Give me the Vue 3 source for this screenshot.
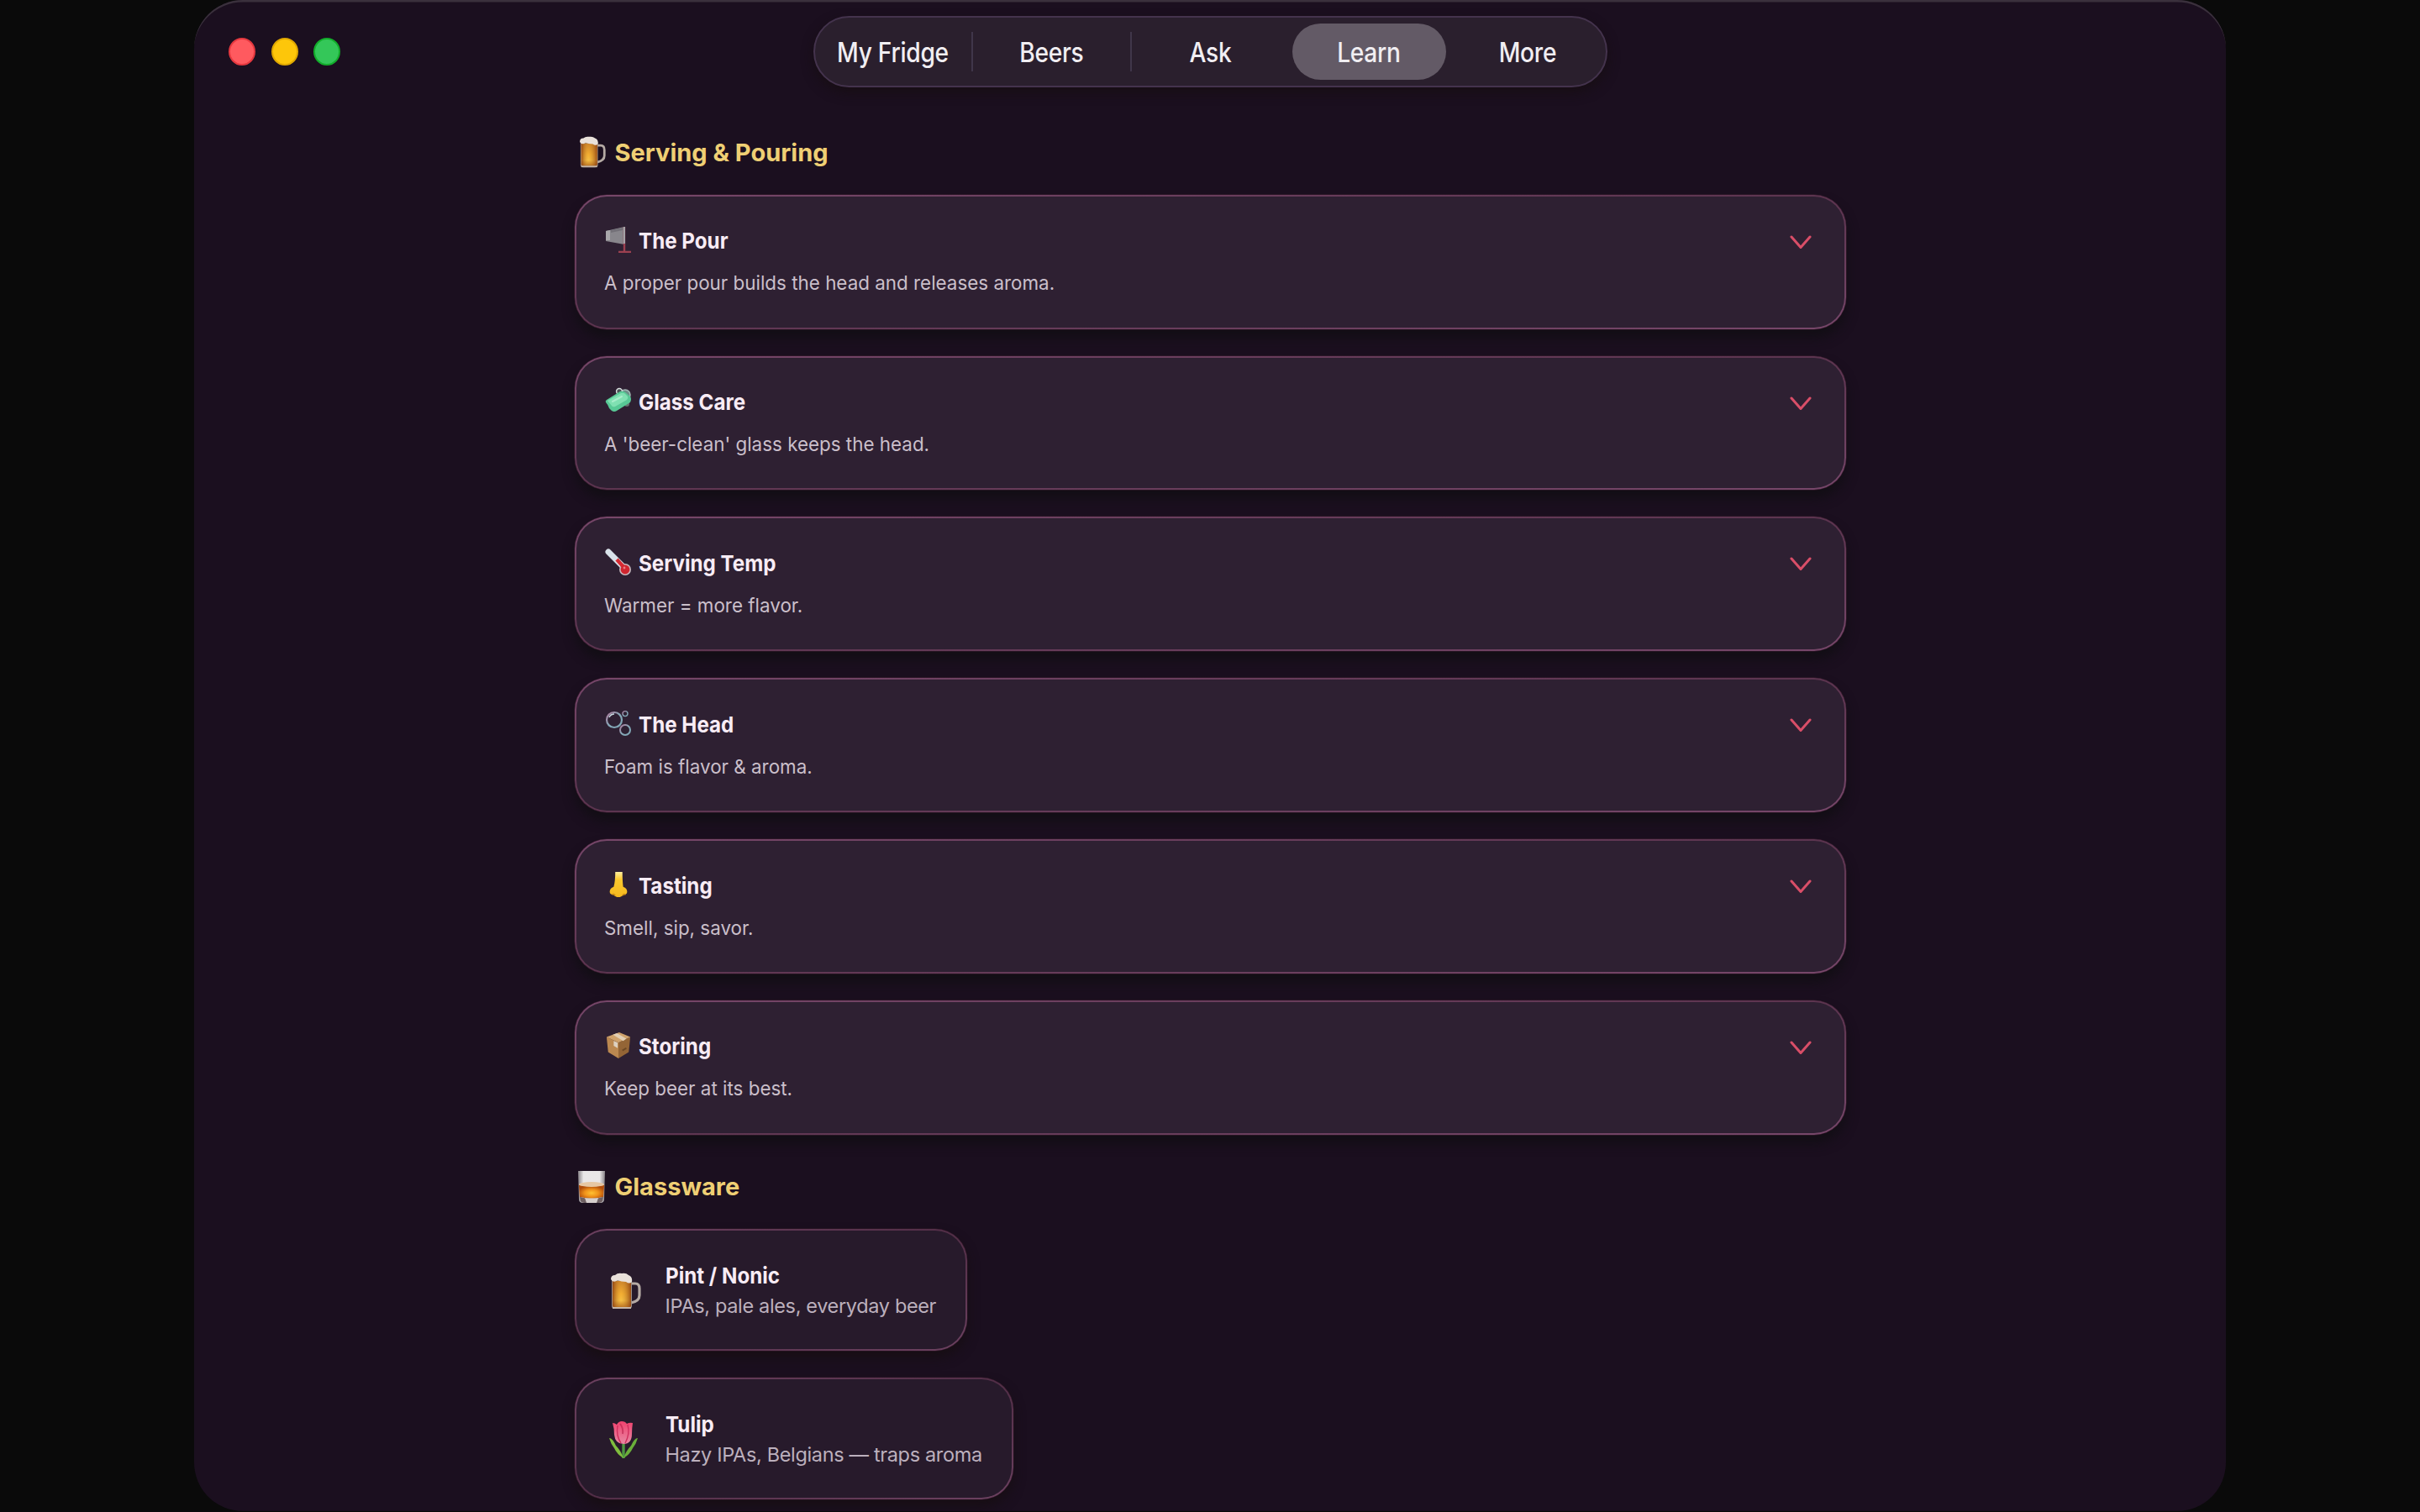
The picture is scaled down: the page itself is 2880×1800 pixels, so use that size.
<script setup>
import { ref } from 'vue';

const tabs = ['My Fridge', 'Beers', 'Ask', 'Learn', 'More'];
const activeTab = ref('Learn');

const serving = ref([
    { id: 'pour', title: 'The Pour', text: 'A proper pour builds the head and releases aroma.' },
    { id: 'soap', title: 'Glass Care', text: "A 'beer-clean' glass keeps the head." },
    { id: 'temp', title: 'Serving Temp', text: 'Warmer = more flavor.' },
    { id: 'bubbles', title: 'The Head', text: 'Foam is flavor & aroma.' },
    { id: 'nose', title: 'Tasting', text: 'Smell, sip, savor.' },
    { id: 'box', title: 'Storing', text: 'Keep beer at its best.' }
]);

const glassware = [
    { id: 'mug', title: 'Pint / Nonic', text: 'IPAs, pale ales, everyday beer' },
    { id: 'tulip', title: 'Tulip', text: 'Hazy IPAs, Belgians — traps aroma' }
];

// a divider is only shown between two tabs that are not next to the active one
const hasDivider = (index) => {
    const active = tabs.indexOf(activeTab.value);
    return index !== active && index !== active + 1;
}
</script>

<template>
    <svg class="sprite" width="0" height="0" aria-hidden="true">
        <defs>
            <linearGradient id="beer" x1="0" y1="0" x2="0" y2="1">
                <stop offset="0" stop-color="#b8621c" />
                <stop offset="0.5" stop-color="#f0a028" />
                <stop offset="0.75" stop-color="#f2b640" />
                <stop offset="1" stop-color="#a04c12" />
            </linearGradient>
            <linearGradient id="beerSide" x1="0" y1="0" x2="1" y2="0">
                <stop offset="0" stop-color="#8c3f10" stop-opacity="0.85" />
                <stop offset="0.45" stop-color="#ffd24a" stop-opacity="0.3" />
                <stop offset="1" stop-color="#8c3f10" stop-opacity="0.85" />
            </linearGradient>
            <radialGradient id="whisky" cx="0.5" cy="0.6" r="0.55">
                <stop offset="0" stop-color="#ffc233" />
                <stop offset="0.5" stop-color="#f0921a" />
                <stop offset="1" stop-color="#b04c0a" />
            </radialGradient>
            <linearGradient id="glassTop" x1="0" y1="0" x2="1" y2="0">
                <stop offset="0" stop-color="#8f8b8f" />
                <stop offset="0.2" stop-color="#f4f2f2" />
                <stop offset="0.8" stop-color="#f4f2f2" />
                <stop offset="1" stop-color="#8f8b8f" />
            </linearGradient>
            <linearGradient id="skin" x1="0" y1="0" x2="0" y2="1">
                <stop offset="0" stop-color="#fff0a0" />
                <stop offset="0.3" stop-color="#fcc92e" />
                <stop offset="1" stop-color="#f5b81e" />
            </linearGradient>
            <linearGradient id="petal" x1="0" y1="0" x2="0" y2="1">
                <stop offset="0" stop-color="#f0426e" />
                <stop offset="1" stop-color="#e888a4" />
            </linearGradient>
            <linearGradient id="bubble" x1="0" y1="0" x2="1" y2="1">
                <stop offset="0" stop-color="#b07a9c" />
                <stop offset="0.5" stop-color="#86a9b8" />
                <stop offset="1" stop-color="#7fa5b4" />
            </linearGradient>
        </defs>

        <symbol id="mug" viewBox="0 0 36 44" preserveAspectRatio="none">
            <path d="M24 13h5q5 0 5 6v8q0 7-10 9" fill="none" stroke="#b5aaa4" stroke-width="3.2" />
            <path d="M1 8h24v32q0 3-4 3H5q-4 0-4-3z" fill="#9c8f86" />
            <path d="M2 10h22v29q0 2-3 2H5q-3 0-3-2z" fill="url(#beer)" />
            <path d="M2 10h22v29q0 2-3 2H5q-3 0-3-2z" fill="url(#beerSide)" />
            <path d="M0 8Q0 3 5 3Q8 0 13 1Q18 0 21 3Q26 5 25 11Q22 14 18 11Q12 11 8 9Q3 13 0 8z" fill="#e9e1da" />
            <path d="M2 42h22" stroke="#c5b6a8" stroke-width="2" />
        </symbol>

        <symbol id="tumbler" viewBox="0 0 34 40" preserveAspectRatio="none">
            <path d="M1 1h32l-1 34q0 4-5 4H7q-5 0-5-4z" fill="url(#glassTop)" opacity="0.95" />
            <path d="M2 18h30l-1 14q-14 3-28 0z" fill="url(#whisky)" />
            <ellipse cx="17" cy="17" rx="15" ry="3" fill="#e6c7a4" />
            <path d="M3 32q14 4 28 0l-1 5q-1 2-4 2H8q-3 0-4-2z" fill="#6e6062" />
            <path d="M9 33q8 2 16 0l-2 6H11z" fill="#d6cfcd" />
        </symbol>

        <symbol id="pour" viewBox="0 0 32 32">
            <path d="M1 6L23 1v21L1 18z" fill="#88868c" />
            <path d="M1 6l5-1v12l-5 0z" fill="#a8a7aa" />
            <path d="M7 5l14-3v3L7 8z" fill="#737078" />
            <path d="M23 1v29M16 31h15" fill="none" stroke="#9c4050" stroke-width="2.4" />
            <path d="M23 1v20" stroke="#a4a2a6" stroke-width="2" />
        </symbol>

        <symbol id="soap" viewBox="0 0 32 32">
            <circle cx="24" cy="9" r="6" fill="#6c8f88" stroke="#a4b8b6" stroke-width="1.5" />
            <circle cx="17" cy="5" r="3.4" fill="#4b5355" stroke="#d6dddd" stroke-width="1.5" />
            <circle cx="26" cy="20" r="3" fill="#65736f" />
            <path d="M2 15L18 5q3-1 6 1l6 5q2 3 0 7L14 28q-3 2-6 0l-3-3q-2-5-4-7-1-2 1-3z" fill="#58c996" />
            <path d="M3 16L19 7q3-1 5 1l3 3q1 2-1 4l-14 8q-3 1-4-1z" fill="#80e0b2" />
            <path d="M9 17l11-6" stroke="#a8edcb" stroke-width="2" stroke-linecap="round" />
        </symbol>

        <symbol id="temp" viewBox="0 0 32 32">
            <path d="M4 4l17 17" stroke="#d9e2ea" stroke-width="7" stroke-linecap="round" />
            <circle cx="24" cy="25" r="7" fill="#c7b6bc" />
            <path d="M14 13l10 11" stroke="#d62a32" stroke-width="4.4" />
            <circle cx="24" cy="25" r="5.4" fill="#cf252f" />
            <circle cx="23" cy="23" r="1.4" fill="#ee7b80" />
        </symbol>

        <symbol id="bubbles" viewBox="0 0 32 32">
            <g fill="none" stroke="url(#bubble)">
                <circle cx="11" cy="12" r="9" stroke-width="2.2" />
                <circle cx="24" cy="24" r="6" stroke-width="2" />
                <circle cx="24" cy="4.6" r="3" stroke-width="1.4" />
            </g>
            <path d="M5 9q2-4 6-4" fill="none" stroke="#c9dbe2" stroke-width="1.4" />
        </symbol>

        <symbol id="nose" viewBox="0 0 32 34">
            <path d="M12 1h9q0 12 1 19 5 2 5 6 0 4-5 4-2 3-6 3t-6-3q-5 0-5-4 0-4 5-6 2-7 2-19z" fill="url(#skin)" />
            <path d="M8 30q2-2 4 1M25 30q-2-2-4 1" fill="none" stroke="#cf8f14" stroke-width="1.5" />
        </symbol>

        <symbol id="box" viewBox="0 0 32 34">
            <path d="M1 7l15 7v20L3 26z" fill="#bb8850" />
            <path d="M31 7l-15 7v20l13-8z" fill="#946536" />
            <path d="M1 7l16-6 14 6-15 7z" fill="#cfa26c" />
            <path d="M9 4l5-2 12 7-4 3z" fill="#e2cfb4" />
            <path d="M10 12l5 2v7l-5-3z" fill="#ddd0c0" />
            <path d="M21 24l5-3" stroke="#6c4824" stroke-width="2" />
        </symbol>

        <symbol id="tulip" viewBox="0 0 34 46">
            <path d="M17 28v17" stroke="#4c9640" stroke-width="3.4" />
            <path d="M0 21q4 0 8 9 6 6 9 15-8-5-11-12-4-5-6-12z" fill="#7fbd3e" />
            <path d="M34 21q-4 0-8 9-6 6-9 15 8-5 11-12 4-5 6-12z" fill="#6aae3a" />
            <path d="M4 3q3 0 5 2 2-4 6-4 4 0 6 3 3-2 7-1-1 6-1 13 0 12-10 12T6 17Q6 9 4 3z" fill="url(#petal)" />
            <path d="M10 6q-2 12 4 21M22 5q3 11-3 22" fill="none" stroke="#cf2e5d" stroke-width="1.4" />
            <path d="M13 4q4 5 3 12" fill="none" stroke="#b81e48" stroke-width="2" opacity="0.6" />
        </symbol>
    </svg>

    <div class="window">
        <header class="titlebar">
            <div class="lights">
                <span class="light light-close"></span>
                <span class="light light-minimize"></span>
                <span class="light light-zoom"></span>
            </div>
            <nav class="tabs">
                <template v-for="(tab, index) in tabs" :key="tab">
                    <span v-if="index > 0" class="tab-gap" :class="{ 'tab-divider': hasDivider(index) }"></span>
                    <button class="tab" :class="{ 'tab-active': tab === activeTab }" @click="activeTab = tab">
                        <span class="tab-label">{{ tab }}</span>
                    </button>
                </template>
            </nav>
        </header>

        <main class="content">
            <h2 class="heading">
                <svg class="heading-icon heading-icon-mug"><use href="#mug" /></svg>
                <span>Serving &amp; Pouring</span>
            </h2>
            <section class="topics">
                <article v-for="item in serving" :key="item.id" class="card topic">
                    <div class="topic-head">
                        <svg class="topic-icon"><use :href="'#' + item.id" /></svg>
                        <h3 class="card-title">{{ item.title }}</h3>
                        <svg class="chevron" viewBox="0 0 26 18">
                            <path d="M2 2l11 12.5L24 2" />
                        </svg>
                    </div>
                    <p class="card-text">{{ item.text }}</p>
                </article>
            </section>

            <h2 class="heading heading-glassware">
                <svg class="heading-icon"><use href="#tumbler" /></svg>
                <span>Glassware</span>
            </h2>
            <section class="glasses">
                <article v-for="glass in glassware" :key="glass.id" class="card glass">
                    <svg class="glass-icon" :class="'glass-icon-' + glass.id"><use :href="'#' + glass.id" /></svg>
                    <div>
                        <h3 class="card-title">{{ glass.title }}</h3>
                        <p class="card-text">{{ glass.text }}</p>
                    </div>
                </article>
            </section>
        </main>
    </div>
</template>

<style>
body{
    margin: 0;
    background-color: #0a0a0a;
    overflow: hidden;
}
</style>

<style scoped>

.sprite{
    position: absolute;
}

/* window */
.window{
    width: 2418px;
    height: 1799px;
    margin: 0 auto;
    box-sizing: border-box;
    overflow: hidden;
    border-radius: 58px;
    background-color: #1b0f1f;
    box-shadow: inset 0 3px 0 -0.5px #3a303c;
    font-family: Inter, Roboto, sans-serif;
}

/* titlebar */
.titlebar{
    display: grid;
    grid-template-columns: 1fr auto 1fr;
    align-items: center;
    padding-top: 19px;
}
.lights{
    display: flex;
    gap: 18.5px;
    padding-left: 41px;
}
.light{
    width: 32px;
    height: 33px;
    box-sizing: border-box;
    border-radius: 50%;
}
.light-close{
    background-color: #ff5a5f;
    border: 2px solid #e5383f;
}
.light-minimize{
    background-color: #fdc60a;
    border: 2px solid #e0a800;
}
.light-zoom{
    background-color: #34c759;
    border: 2px solid #12ad2b;
}
.tabs{
    display: flex;
    align-items: center;
    justify-content: center;
    width: 945px;
    height: 85px;
    box-sizing: border-box;
    border: 2px solid #44334d;
    border-radius: 43px;
    background-color: #2a1f2d;
    box-shadow: 0 6px 14px rgba(22, 14, 18, 0.8);
}
.tab{
    width: 183px;
    height: 67px;
    padding: 1px 0 0;
    border: none;
    border-radius: 34px;
    background-color: transparent;
    color: #f1eef2;
    font-family: inherit;
    font-size: 32px;
    font-weight: 500;
    letter-spacing: -0.3px;
    white-space: nowrap;
}
.tab-label{
    display: inline-block;
    transform: scaleX(0.88);
}
.tab-active{
    background-color: #635a66;
}
.tab-gap{
    width: 2px;
    height: 47px;
    margin: 0 2px;
}
.tab-divider{
    background-color: #40364a;
}

/* content */
.content{
    width: 1513px;
    margin: 0 auto;
    padding-top: 59.4px;
}
.heading{
    display: flex;
    align-items: center;
    height: 36px;
    margin: 0 0 32.5px;
    color: #efcf74;
    font-size: 29px;
    line-height: 37px;
    font-weight: 700;
    letter-spacing: 0;
}
.heading-icon{
    width: 34px;
    height: 40px;
    margin: 0 11px 0 3px;
}
.heading-icon-mug{
    width: 31px;
    height: 38px;
    margin: 0 11px 0 6px;
}
.heading-glassware{
    margin: 44px 0 32px;
}

/* cards */
.card{
    box-sizing: border-box;
    border: 2px solid transparent;
    border-radius: 38px;
    box-shadow: 0 0 0 0.5px #3c1c30, 0 10px 14px rgba(17, 14, 19, 0.85);
}
.card-title{
    margin: 0;
    color: #f8ecf5;
    font-size: 26px;
    line-height: 32px;
    font-weight: 700;
    transform: scaleX(0.93);
    transform-origin: left;
}
.card-text{
    margin: 0;
    color: #cabfca;
    font-size: 23.5px;
    line-height: 30px;
    font-weight: 400;
    white-space: nowrap;
}

/* serving & pouring */
.topics{
    display: grid;
    gap: 32px;
}
.topic{
    height: 159.8px;
    padding: 37.5px 39px 0 33px;
    background:
        linear-gradient(#2e2032, #2e2032) padding-box,
        linear-gradient(to bottom right, #77476a, #5c344f 50%, #77476a) border-box;
}
.topic .card-text{
    transform: scaleX(0.953);
    transform-origin: left;
}
.topic-head{
    display: flex;
    align-items: center;
    margin-bottom: 19px;
}
.topic-icon{
    width: 32px;
    height: 32px;
    margin: -4px 8.5px 0 1px;
}
.chevron{
    width: 26px;
    height: 18px;
    margin-left: auto;
    margin-top: 3px;
    fill: none;
    stroke: #d94e68;
    stroke-width: 3;
    stroke-linecap: round;
    stroke-linejoin: round;
}

/* glassware */
.glasses{
    display: grid;
    justify-items: start;
    gap: 31.8px;
}
.glass{
    display: flex;
    height: 145.5px;
    padding: 38px 35px 0 41px;
    background:
        linear-gradient(#271a2b, #271a2b) padding-box,
        linear-gradient(to bottom right, #6c4160, #522e47 50%, #6c4160) border-box;
    box-shadow: 0 0 0 0.5px #331829, 0 8px 14px rgba(22, 14, 18, 0.85);
}
.glass .card-text{
    margin-top: 5px;
    color: #bcb0bd;
    letter-spacing: -0.35px;
}
.glass-icon{
    width: 36px;
    height: 44px;
    margin: 12px 29px 0 0;
}
.glass-icon-tulip{
    width: 34px;
    height: 46px;
    margin: 11px 33px 0 -2px;
}

</style>
